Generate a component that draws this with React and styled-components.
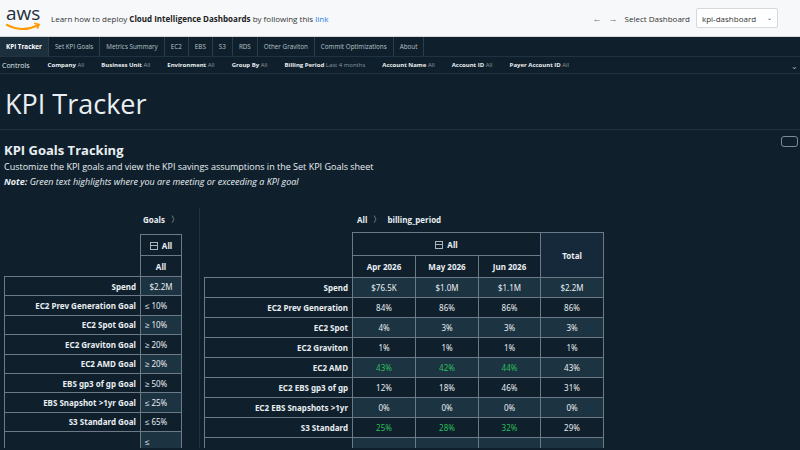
import React from "react";
import styled, { createGlobalStyle } from "styled-components";

const Global = createGlobalStyle`
  body { margin: 0; background: #0f202c; font-family: "Open Sans", "Liberation Sans", sans-serif; overflow: hidden; }
`;

const TopBar = styled.div`
  height: 37px; background: #f7f8f9; border-bottom: 1px solid #d5d8dc;
  display: flex; align-items: center; padding: 0 22px 0 5px; box-sizing: border-box;
  font-size: 8px; color: #333;
`;
const Notice = styled.div`
  margin-left: 6px; flex: 1;
  b { color: #222; }
  a { color: #2a7ae2; text-decoration: none; }
`;
const NavArrow = styled.span` color: #777; font-size: 9px; margin-right: 7px; `;
const SelectBox = styled.div`
  margin-left: 6px; width: 82px; height: 20px; border: 1px solid #d5d8dc; background: #fff;
  border-radius: 2px; display: flex; align-items: center; justify-content: space-between;
  padding: 0 5px; box-sizing: border-box; font-size: 8px; color: #333;
`;
const Tabs = styled.div`
  height: 19px; display: flex; background: #0f202c; border-bottom: 1px solid #1f3342;
`;
const Tab = styled.div`
  font-size: 6.3px; color: ${p => (p.$active ? "#fff" : "#b7c1c8")};
  background: ${p => (p.$active ? "#1b2f3d" : "transparent")};
  font-weight: ${p => (p.$active ? 700 : 400)};
  padding: 0 6px; display: flex; align-items: center; border-right: 1px solid #2a3d4b;
`;
const Controls = styled.div`
  height: 16px; display: flex; align-items: center; padding: 0 2px; font-size: 6px; color: #dfe5ea;
  border-bottom: 1px solid #1f3342;
`;
const Ctrl = styled.span`
  margin-right: 17px; b { color: #e9eef2; } span { color: #8a98a3; }
`;
const Title = styled.div`
  font-size: 27px; color: #e9eef2; padding: 12px 5px 7px; border-bottom: 1px solid #1f3342;
  line-height: 36px;
`;
const Section = styled.div`
  padding: 12px 4px 0; color: #e9eef2; position: relative; height: 70px; box-sizing: border-box;
  h2 { margin: 0; font-size: 13px; font-weight: 700; line-height: 17px; }
  p { margin: 0; font-size: 9px; line-height: 15px; }
  i { font-size: 9px; line-height: 15px; display: block; }
`;
const Expand = styled.div`
  position: absolute; right: 2px; top: 6px; width: 15px; height: 9px; border: 1px solid #7d8b96;
  border-radius: 3px;
`;
const Panels = styled.div` display: flex; margin-top: 8px; `;
const Panel = styled.div`
  width: ${p => p.$w}px; padding-left: 4px; box-sizing: border-box;
  border-right: ${p => (p.$divider ? "1px solid #1f3342" : "none")}; height: 240px;
`;
const Crumb = styled.div`
  height: 22px; display: flex; align-items: center; font-size: 8px; font-weight: 700; color: #e9eef2;
  justify-content: ${p => p.$align || "flex-start"}; padding-left: ${p => p.$pad || 0}px; gap: 6px;
  padding-right: 20px;
`;
const Table = styled.table`
  border-collapse: collapse; font-size: 8px; color: #e9eef2; margin-top: ${p => p.$mt || 0}px;
  font-family: "Noto Sans", sans-serif;
  td, th { border: 1px solid #6b7a86; padding: 0 4px; height: ${p => p.$rh}px; box-sizing: border-box; }
  th { font-weight: 700; text-align: center; }
  .blank { border: none; }
`;
const Label = styled.td` text-align: right; font-weight: 700; width: ${p => p.$w}px; `;
const Val = styled.td`
  text-align: ${p => (p.$left ? "left" : "center")}; width: ${p => p.$w}px;
  background: ${p => (p.$alt ? "#1c3341" : "transparent")};
  color: ${p => (p.$good ? "#2bbf5a" : "#e9eef2")};
`;
const Box = styled.span`
  display: inline-block; width: 6px; height: 6px; border: 1px solid #aab4bb; vertical-align: -1px;
  margin-right: 4px; position: relative;
  &:after { content: ""; position: absolute; left: 0; right: 0; top: 2px; border-top: 1px solid #aab4bb; }
`;

const goals = [
  ["Spend", "$2.2M"],
  ["EC2 Prev Generation Goal", "≤  10%"],
  ["EC2 Spot Goal", "≥  10%"],
  ["EC2 Graviton Goal", "≥  20%"],
  ["EC2 AMD Goal", "≥  20%"],
  ["EBS gp3 of gp Goal", "≥  50%"],
  ["EBS Snapshot >1yr Goal", "≤  25%"],
  ["S3 Standard Goal", "≤  65%"],
  ["", "≤"],
];
const rows = [
  ["Spend", "$76.5K", "$1.0M", "$1.1M", "$2.2M", false],
  ["EC2 Prev Generation", "84%", "86%", "86%", "86%", false],
  ["EC2 Spot", "4%", "3%", "3%", "3%", false],
  ["EC2 Graviton", "1%", "1%", "1%", "1%", false],
  ["EC2 AMD", "43%", "42%", "44%", "43%", true],
  ["EC2 EBS gp3 of gp", "12%", "18%", "46%", "31%", false],
  ["EC2 EBS Snapshots >1yr", "0%", "0%", "0%", "0%", false],
  ["S3 Standard", "25%", "28%", "32%", "29%", true],
  ["", "", "", "", "", false],
];

const Aws = () => (
  <svg width="40" height="32" viewBox="0 0 40 32">
    <text x="1" y="18" fontFamily="Open Sans, sans-serif" fontSize="19" fill="#232f3e">aws</text>
    <path d="M2 23 Q18 31 33 23" stroke="#ff9900" strokeWidth="2.2" fill="none" strokeLinecap="round" />
    <path d="M30 21.5 L34 22.5 L32.5 26" stroke="#ff9900" strokeWidth="1.8" fill="none" strokeLinecap="round" />
  </svg>
);

export default function App() {
  return (
    <>
      <Global />
      <TopBar>
        <Aws />
        <Notice>
          Learn how to deploy <b>Cloud Intelligence Dashboards</b> by following this <a>link</a>
        </Notice>
        <NavArrow>←</NavArrow>
        <NavArrow>→</NavArrow>
        <span>Select Dashboard</span>
        <SelectBox><span>kpi-dashboard</span><span style={{ fontSize: 6 }}>⌄</span></SelectBox>
      </TopBar>
      <Tabs>
        {["KPI Tracker", "Set KPI Goals", "Metrics Summary", "EC2", "EBS", "S3", "RDS", "Other Graviton", "Commit Optimizations", "About"].map((t, i) => (
          <Tab key={t} $active={i === 0}>{t}</Tab>
        ))}
      </Tabs>
      <Controls>
        <Ctrl style={{ marginRight: 18, fontSize: 7 }}>Controls</Ctrl>
        {[["Company", "All"], ["Business Unit", "All"], ["Environment", "All"], ["Group By", "All"], ["Billing Period", "Last 4 months"], ["Account Name", "All"], ["Account ID", "All"], ["Payer Account ID", "All"]].map(([k, v]) => (
          <Ctrl key={k}><b>{k}</b> <span>{v}</span></Ctrl>
        ))}
        <span style={{ marginLeft: "auto", color: "#aab4bb", fontSize: 8 }}>⌄</span>
      </Controls>
      <Title>KPI Tracker</Title>
      <Section>
        <h2>KPI Goals Tracking</h2>
        <p>Customize the KPI goals and view the KPI savings assumptions in the Set KPI Goals sheet</p>
        <i><b>Note:</b> Green text highlights where you are meeting or exceeding a KPI goal</i>
        <Expand />
      </Section>
      <Panels>
        <Panel $w={200} $divider>
          <Crumb $align="flex-end">Goals <span style={{ fontWeight: 400 }}>〉</span></Crumb>
          <Table $rh={19.4} $mt={4}>
            <tbody>
              <tr><td className="blank" /><th style={{ height: 21 }}><Box />All</th></tr>
              <tr><td className="blank" /><th style={{ height: 21 }}>All</th></tr>
              {goals.map(([l, v], i) => (
                <tr key={i}>
                  <Label $w={136}>{l}</Label>
                  <Val $w={41} $alt={i % 2 === 0} $left={i > 0}>{v}</Val>
                </tr>
              ))}
            </tbody>
          </Table>
        </Panel>
        <Panel $w={600}>
          <Crumb $pad={153}>All <span style={{ fontWeight: 400 }}>〉</span> billing_period</Crumb>
          <Table $rh={20} $mt={2}>
            <tbody>
              <tr>
                <td className="blank" />
                <th colSpan={3} style={{ height: 23 }}><Box />All</th>
                <th rowSpan={2} style={{ background: "#15293a" }}>Total</th>
              </tr>
              <tr>
                <td className="blank" />
                {["Apr 2026", "May 2026", "Jun 2026"].map(m => <th key={m} style={{ height: 22 }}>{m}</th>)}
              </tr>
              {rows.map(([l, a, b, c, t, g], i) => (
                <tr key={i}>
                  <Label $w={148}>{l}</Label>
                  <Val $w={63} $alt={i % 2 === 0} $good={g}>{a}</Val>
                  <Val $w={63} $alt={i % 2 === 0} $good={g}>{b}</Val>
                  <Val $w={62} $alt={i % 2 === 0} $good={g}>{c}</Val>
                  <Val $w={63} $alt={i % 2 === 0}>{t}</Val>
                </tr>
              ))}
            </tbody>
          </Table>
        </Panel>
      </Panels>
    </>
  );
}
